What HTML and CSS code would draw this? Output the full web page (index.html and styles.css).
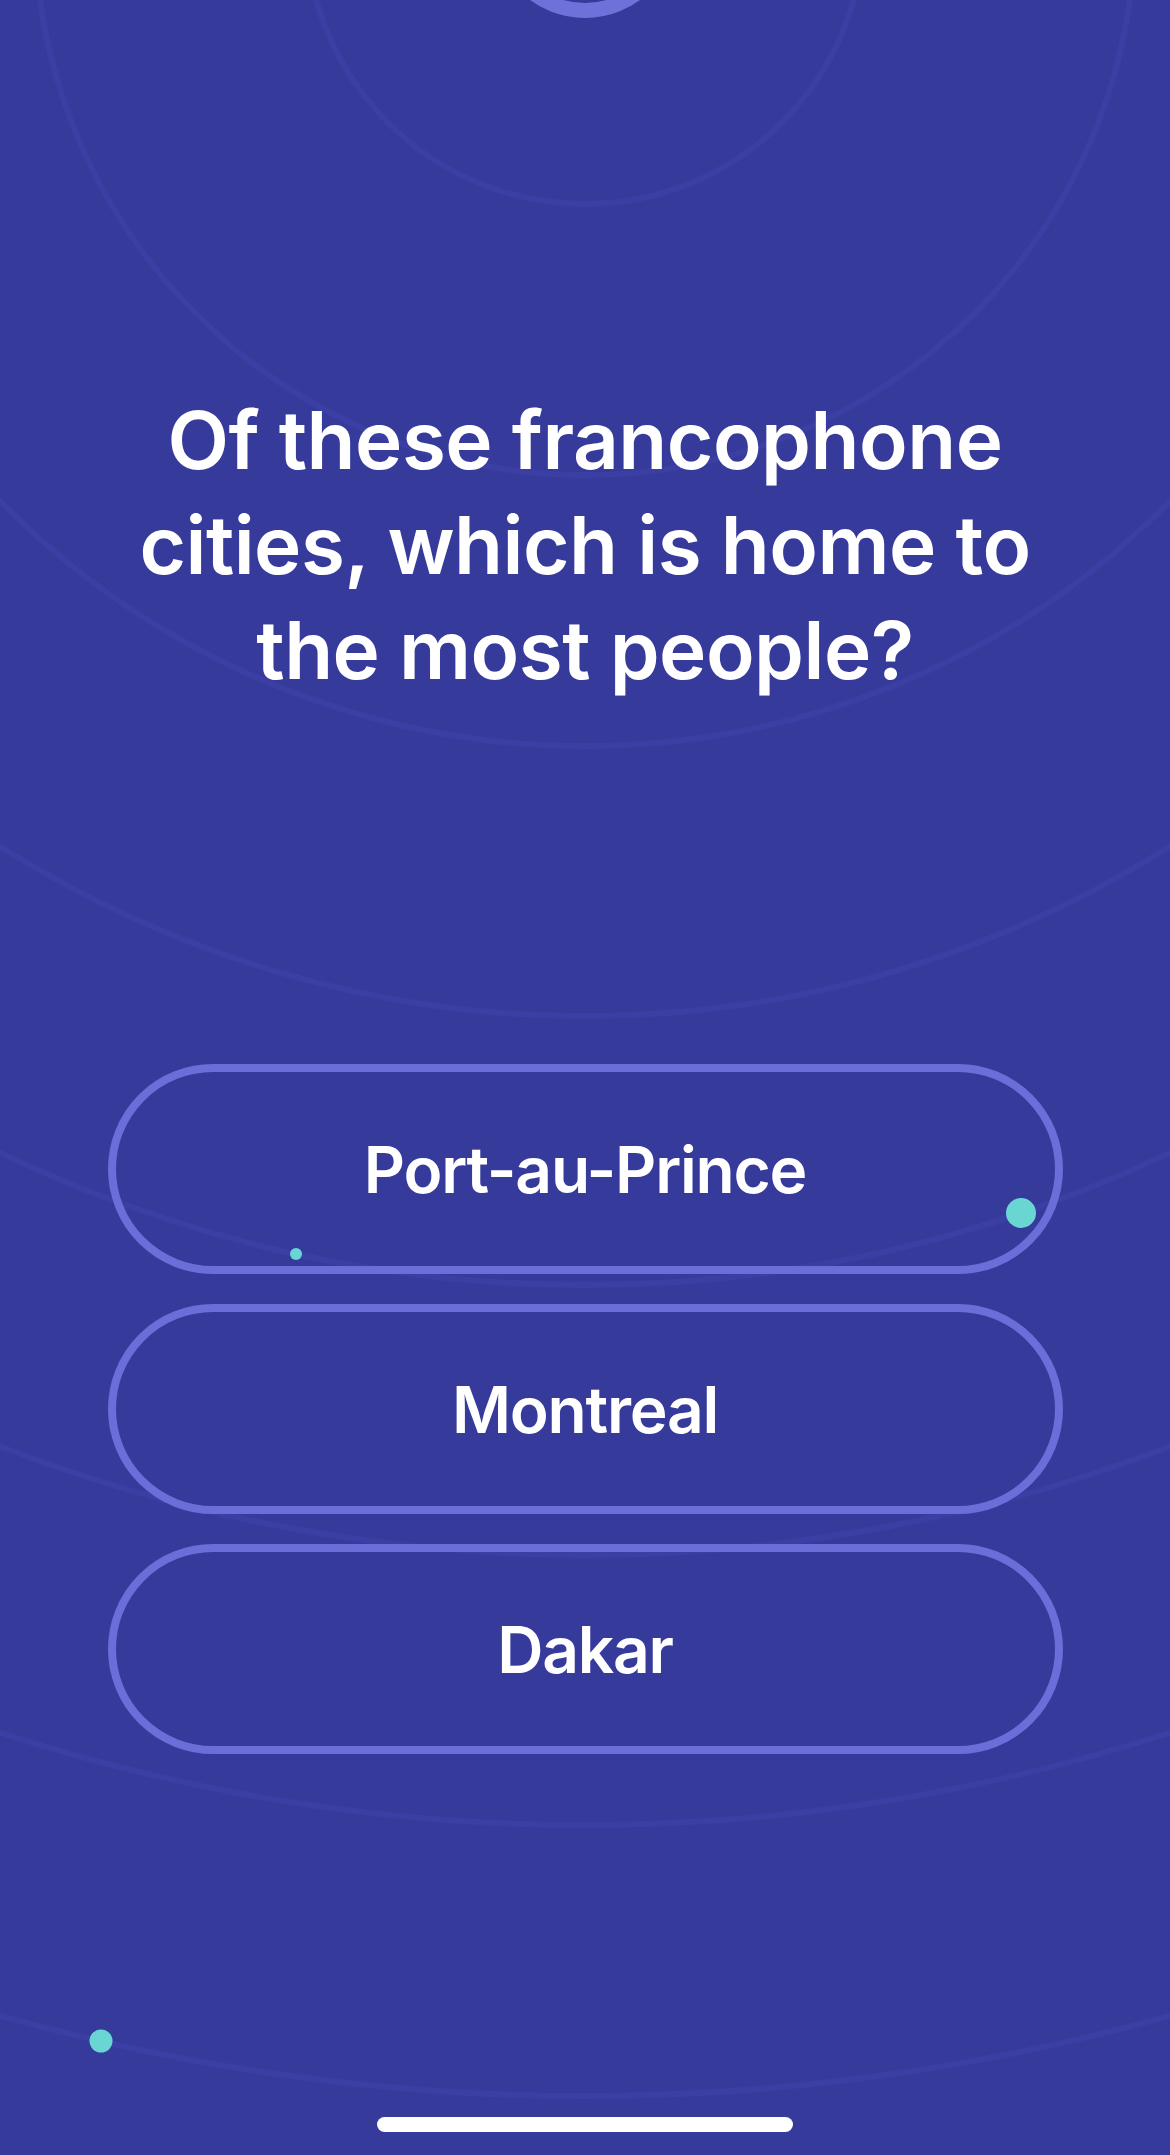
FILE: index.html
```html
<!DOCTYPE html>
<html lang="en">
<head>
<meta charset="utf-8">
<title>Quiz</title>
<link rel="stylesheet" href="styles.css">
</head>
<body>
<div class="screen">
  <svg class="ripples" width="1170" height="2155" viewBox="0 0 1170 2155" aria-hidden="true">
    <g class="rings" fill="none" stroke="#3B3FA4" stroke-width="6">
      <circle cx="585" cy="-75" r="279"/>
      <circle cx="585" cy="-75" r="550"/>
      <circle cx="585" cy="-75" r="821"/>
      <circle cx="585" cy="-75" r="1091"/>
      <circle cx="585" cy="-75" r="1360"/>
      <circle cx="585" cy="-75" r="1630"/>
      <circle cx="585" cy="-75" r="1900"/>
      <circle cx="585" cy="-75" r="2171"/>
    </g>
    <circle cx="585" cy="-75" r="85.5" fill="none" stroke="#6E71D9" stroke-width="15"/>
    <g fill="#6AD6D4">
      <circle cx="1021" cy="1213" r="15"/>
      <circle cx="296" cy="1254" r="6"/>
      <circle cx="101" cy="2041" r="11.5"/>
    </g>
  </svg>

  <main class="content">
    <h1 class="question">Of these francophone<br>cities, which is home to<br>the most people?</h1>
    <div class="answers">
      <button class="answer">Port-au-Prince</button>
      <button class="answer">Montreal</button>
      <button class="answer">Dakar</button>
    </div>
  </main>

  <div class="home-indicator"></div>
</div>
</body>
</html>
```

FILE: styles.css
```css
* {
  box-sizing: border-box;
}

html, body {
  margin: 0;
  padding: 0;
  background: #353A9B;
}

.screen {
  position: relative;
  width: 1170px;
  height: 2155px;
  overflow: hidden;
  background: #353A9B;
  font-family: Inter, "Noto Sans", "Liberation Sans", sans-serif;
  color: #ffffff;
}

.ripples {
  position: absolute;
  left: 0;
  top: 0;
  display: block;
}

.content {
  position: relative;
  display: flex;
  flex-direction: column;
  align-items: center;
  padding-top: 387px;
}

.question {
  margin: 0;
  font-size: 80px;
  font-weight: 600;
  line-height: 105px;
  text-align: center;
  letter-spacing: -0.5px;
}

.answers {
  margin-top: 362px;
  width: 955px;
  display: flex;
  flex-direction: column;
  gap: 30px;
}

.answer {
  height: 210px;
  width: 100%;
  border: 8px solid #6B6ED8;
  border-radius: 105px;
  background: transparent;
  color: #ffffff;
  font-family: inherit;
  font-size: 64px;
  font-weight: 600;
  letter-spacing: -1.2px;
  display: flex;
  align-items: center;
  justify-content: center;
  padding: 0;
}

.home-indicator {
  position: absolute;
  left: 377px;
  top: 2117px;
  width: 416px;
  height: 15px;
  border-radius: 8px;
  background: #ffffff;
}
```
